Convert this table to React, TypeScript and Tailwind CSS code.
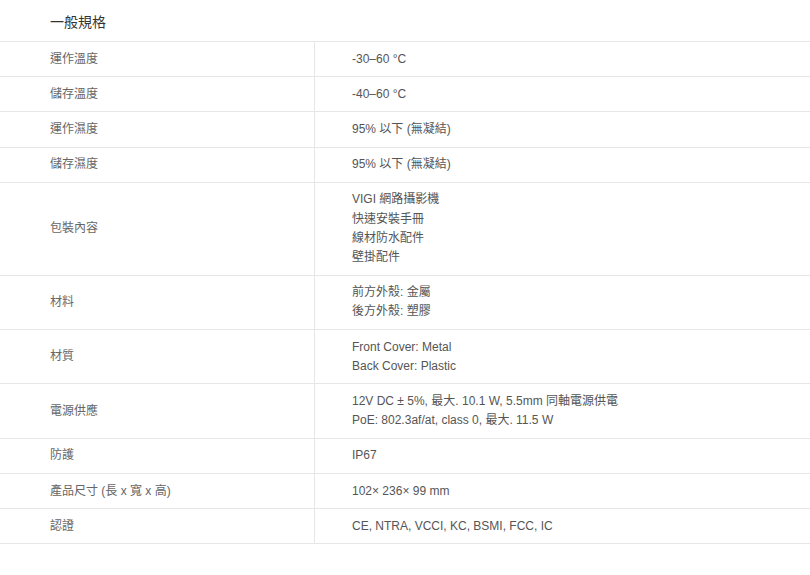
import React from "react";

const rows: { label: string; value: string[] }[] = [
  { label: "運作溫度", value: ["-30–60 °C"] },
  { label: "儲存溫度", value: ["-40–60 °C"] },
  { label: "運作濕度", value: ["95% 以下 (無凝結)"] },
  { label: "儲存濕度", value: ["95% 以下 (無凝結)"] },
  { label: "包裝內容", value: ["VIGI 網路攝影機", "快速安裝手冊", "線材防水配件", "壁掛配件"] },
  { label: "材料", value: ["前方外殼: 金屬", "後方外殼: 塑膠"] },
  { label: "材質", value: ["Front Cover: Metal", "Back Cover: Plastic"] },
  { label: "電源供應", value: ["12V DC ± 5%, 最大. 10.1 W, 5.5mm 同軸電源供電", "PoE: 802.3af/at, class 0, 最大. 11.5 W"] },
  { label: "防護", value: ["IP67"] },
  { label: "產品尺寸 (長 x 寬 x 高)", value: ["102× 236× 99 mm"] },
  { label: "認證", value: ["CE, NTRA, VCCI, KC, BSMI, FCC, IC"] },
];

export default function App() {
  return (
    <div
      className="w-[810px] min-h-[575px] bg-white"
      style={{ fontFamily: '"Liberation Sans", "Noto Sans CJK TC", sans-serif' }}
    >
      {/* section title */}
      <div className="h-[41px] flex items-center pt-[3px] pl-[50px] text-[14px] text-[#333]">一般規格</div>
      <div className="border-t border-[#e6e6e6]">
        {rows.map((r) => (
          <div key={r.label} className="grid grid-cols-[315px_1fr] border-b border-[#e6e6e6] text-[12px] leading-[19.2px]">
            <div className="flex items-center pl-[50px] border-r border-[#e6e6e6] text-[#666]">{r.label}</div>
            <div className="pl-[37px] py-[7.5px] text-[#555]">
              {r.value.map((v) => (
                <div key={v}>{v}</div>
              ))}
            </div>
          </div>
        ))}
      </div>
    </div>
  );
}
